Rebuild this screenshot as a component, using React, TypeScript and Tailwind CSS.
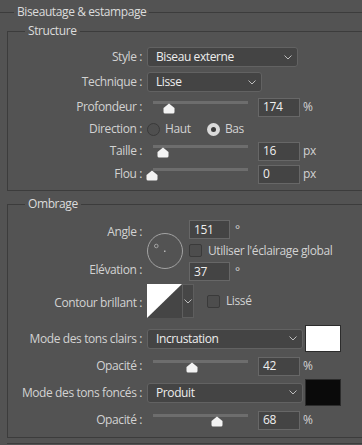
import React from "react";

const LINE = "border-[#3c3c3c]";

function Label({ children, className = "" }: { children: React.ReactNode; className?: string }) {
  return (
    <div className={`w-[134px] shrink-0 text-right text-[#d2d2d2] whitespace-nowrap ${className}`}>{children}</div>
  );
}

function Chevron() {
  return (
    <svg width="8" height="5" viewBox="0 0 8 5" className="shrink-0">
      <path d="M0.5 0.5 L4 4 L7.5 0.5" fill="none" stroke="#bdbdbd" strokeWidth="1" />
    </svg>
  );
}

function Select({ children, className = "" }: { children: React.ReactNode; className?: string }) {
  return (
    <div
      className={`flex items-center justify-between h-[20px] bg-[#444444] border border-[#626262] rounded-[3px] pl-[8px] pr-[5px] text-[#ededed] ${className}`}
    >
      <span className="whitespace-nowrap">{children}</span>
      <Chevron />
    </div>
  );
}

function Num({ children, className = "" }: { children: React.ReactNode; className?: string }) {
  return (
    <div
      className={`flex items-center h-[19px] bg-[#444444] border border-[#676767] pl-[4px] text-[#efefef] shrink-0 ${className}`}
    >
      {children}
    </div>
  );
}

function Slider({ pos }: { pos: number }) {
  return (
    <div className="relative w-[95px] h-[22px] ml-[11px] shrink-0">
      <div className="absolute left-0 right-0 top-[5px] h-[3px] bg-[#6d6d6d]" />
      <svg
        className="absolute top-[7px]"
        style={{ left: pos - 6 }}
        width="12"
        height="11"
        viewBox="0 0 12 11"
      >
        <path d="M6 0.5 L11.5 5 V9 Q11.5 10.5 10 10.5 H2 Q0.5 10.5 0.5 9 V5 Z" fill="#f3f3f3" />
      </svg>
    </div>
  );
}

function SliderRow({
  label,
  pos,
  value,
  unit,
  className = "",
}: {
  label: string;
  pos: number;
  value: string;
  unit: string;
  className?: string;
}) {
  return (
    <div className={`flex items-center h-[22px] ${className}`}>
      <Label>{label}</Label>
      <Slider pos={pos} />
      <Num className="ml-[10px] w-[42px]">{value}</Num>
      <span className="ml-[3px] text-[#d2d2d2]">{unit}</span>
    </div>
  );
}

function Checkbox() {
  return <div className="w-[13px] h-[13px] rounded-[2px] border border-[#3a3a3a] bg-[#4d4d4d] shrink-0" />;
}

function Radio({ checked = false }: { checked?: boolean }) {
  if (checked) {
    return (
      <div className="w-[13px] h-[13px] rounded-full bg-[#dadada] flex items-center justify-center shrink-0">
        <div className="w-[5px] h-[5px] rounded-full bg-[#3a3a3a]" />
      </div>
    );
  }
  return <div className="w-[13px] h-[13px] rounded-full border border-[#3a3a3a] bg-[#4f4f4f] shrink-0" />;
}

export default function App() {
  return (
    <div className="w-[362px] h-[445px] bg-[#535353] overflow-hidden text-[12px] leading-[16px] tracking-[-0.4px] font-['Open_Sans',sans-serif] text-[#d2d2d2]">
      <fieldset className={`mt-[4px] w-[420px] border-t ${LINE}`}>
        <legend className="ml-[14px] px-[3px] text-[#dcdcdc]">Biseautage &amp; estampage</legend>

        <fieldset className={`mt-[3px] ml-[7px] w-[420px] border-t border-l border-b ${LINE}`}>
          <legend className="ml-[17px] px-[3px] text-[#dcdcdc]">Structure</legend>
          <div className="flex flex-col pt-[8px] pb-[5px]">
            <div className="flex items-center h-[20px]">
              <Label>Style :</Label>
              <Select className="ml-[5px] w-[151px]">Biseau externe</Select>
            </div>
            <div className="flex items-center h-[20px] mt-[5px]">
              <Label>Technique :</Label>
              <Select className="ml-[5px] w-[115px]">Lisse</Select>
            </div>
            <SliderRow className="mt-[4px]" label="Profondeur :" pos={16} value="174" unit="%" />
            <div className="flex items-center h-[22px]">
              <Label>Direction :</Label>
              <div className="ml-[5px] w-[60px] flex items-center">
                <Radio />
                <span className="ml-[5px]">Haut</span>
              </div>
              <div className="flex items-center">
                <Radio checked />
                <span className="ml-[5px]">Bas</span>
              </div>
            </div>
            <SliderRow label="Taille :" pos={10} value="16" unit="px" />
            <SliderRow className="mt-[1px]" label="Flou :" pos={-1} value="0" unit="px" />
          </div>
        </fieldset>

        <fieldset className={`mt-[5px] ml-[7px] w-[420px] border-t border-l border-b ${LINE}`}>
          <legend className="ml-[17px] px-[3px] text-[#dcdcdc]">Ombrage</legend>
          <div className="flex flex-col pt-[8px] pb-[6px]">
            <div className="flex h-[61px]">
              <div className="w-[134px] shrink-0 flex flex-col items-end">
                <span className="mt-[4px]">Angle :</span>
                <span className="mt-[22px]">Elévation :</span>
              </div>
              <svg className="ml-[5px] self-center shrink-0" width="36" height="36" viewBox="0 0 36 36">
                <circle cx="18" cy="18" r="17.5" fill="none" stroke="#a3a3a3" strokeWidth="1" />
                <circle cx="9.3" cy="13" r="1.8" fill="none" stroke="#a3a3a3" strokeWidth="1" />
                <rect x="17" y="17.5" width="1.5" height="1.5" fill="#b5b5b5" />
              </svg>
              <div className="ml-[6px] flex flex-col gap-[2px]">
                <div className="flex items-center h-[19px]">
                  <Num className="w-[41px]">151</Num>
                  <span className="ml-[5px]">°</span>
                </div>
                <div className="flex items-center h-[19px]">
                  <Checkbox />
                  <span className="ml-[6px] whitespace-nowrap">Utiliser l'éclairage global</span>
                </div>
                <div className="flex items-center h-[19px]">
                  <Num className="w-[41px]">37</Num>
                  <span className="ml-[5px]">°</span>
                </div>
              </div>
            </div>

            <div className="mt-[3px] flex items-center h-[34px]">
              <Label className="pt-[4px]">Contour brillant :</Label>
              <div className="ml-[5px] flex h-[34px]">
                <svg width="35" height="34" viewBox="0 0 35 34" className="shrink-0">
                  <rect x="0" y="0" width="35" height="34" fill="#454545" />
                  <polygon points="0,0 35,0 0,34" fill="#ffffff" />
                </svg>
                <div className="w-[12px] h-[34px] bg-[#464646] border border-[#5e5e5e] flex items-center justify-center">
                  <Chevron />
                </div>
              </div>
              <div className="ml-[13px] flex items-center">
                <Checkbox />
                <span className="ml-[6px]">Lissé</span>
              </div>
            </div>

            <div className="mt-[7px] flex items-center h-[27px]">
              <Label>Mode des tons clairs :</Label>
              <Select className="ml-[5px] w-[156px]">Incrustation</Select>
              <div className="ml-[2px] w-[36px] h-[27px] bg-white border border-[#2c2c2c]" />
            </div>
            <SliderRow className="mt-[3px]" label="Opacité :" pos={39} value="42" unit="%" />
            <div className="mt-[2px] flex items-center h-[27px]">
              <Label>Mode des tons foncés :</Label>
              <Select className="ml-[5px] w-[156px]">Produit</Select>
              <div className="ml-[2px] w-[36px] h-[27px] bg-[#0a0a0a] border border-[#2c2c2c]" />
            </div>
            <SliderRow className="mt-[3px]" label="Opacité :" pos={64} value="68" unit="%" />
          </div>
        </fieldset>
        <div className={`ml-[7px] mt-[5px] border-t ${LINE}`} />
      </fieldset>
    </div>
  );
}
